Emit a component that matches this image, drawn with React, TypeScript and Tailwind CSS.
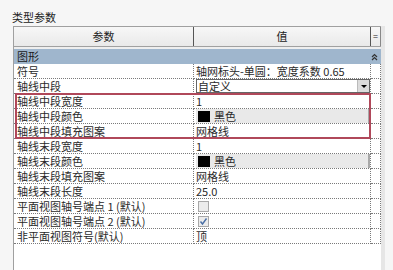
import React from "react";

const font = { fontFamily: '"Noto Sans CJK SC", "Noto Sans", sans-serif' };

function Swatch() {
  return (
    <div className="flex h-full items-center gap-[4px] bg-[#e9e9e9] border-r-2 border-[#a8a8a8] pl-[2px]">
      <div className="h-[11px] w-[12px] bg-black" />
      <span>黑色</span>
    </div>
  );
}

function Dropdown() {
  return (
    <div className="flex h-full items-center justify-between border border-[#666] bg-white pl-[1px]">
      <span>自定义</span>
      <div className="flex h-[12px] w-[12px] items-center justify-center bg-[#dcdcdc] border-l border-[#bbb]">
        <div className="h-0 w-0 border-l-[3px] border-r-[3px] border-t-[3px] border-l-transparent border-r-transparent border-t-black" />
      </div>
    </div>
  );
}

function Check({ on }: { on?: boolean }) {
  return (
    <div className="flex h-full items-center pl-[2px]">
      <div className="flex h-[11px] w-[11px] items-center justify-center border border-[#a8a8a8] bg-[#ececec]">
        {on && (
          <svg width="9" height="9" viewBox="0 0 9 9">
            <path d="M1.5 4.5 L3.5 7 L7.5 1.5" stroke="#4a6fa5" strokeWidth="1.4" fill="none" />
          </svg>
        )}
      </div>
    </div>
  );
}

type Row = { name: string; value: React.ReactNode };

function PropRow({ name, value }: Row) {
  return (
    <div className="grid h-[15px] grid-cols-[180px_177px_10px] text-[11px] leading-[14px] text-[#2a2a2a]">
      <div className="truncate border-b border-r border-dotted border-[#7a7a7a] pl-[3px]">{name}</div>
      <div className="truncate border-b border-r border-dotted border-[#7a7a7a] pl-[2px]">{value}</div>
      <div className="border-b border-r border-dotted border-[#7a7a7a]" />
    </div>
  );
}

export default function App() {
  const top: Row[] = [
    { name: "符号", value: "轴网标头-单圆：宽度系数 0.65" },
    { name: "轴线中段", value: <Dropdown /> },
  ];
  const marked: Row[] = [
    { name: "轴线中段宽度", value: "1" },
    { name: "轴线中段颜色", value: <Swatch /> },
    { name: "轴线中段填充图案", value: "网格线" },
  ];
  const rest: Row[] = [
    { name: "轴线末段宽度", value: "1" },
    { name: "轴线末段颜色", value: <Swatch /> },
    { name: "轴线末段填充图案", value: "网格线" },
    { name: "轴线末段长度", value: "25.0" },
    { name: "平面视图轴号端点 1 (默认)", value: <Check /> },
    { name: "平面视图轴号端点 2 (默认)", value: <Check on /> },
    { name: "非平面视图符号(默认)", value: "顶" },
  ];

  return (
    <div className="flex h-[270px] w-[393px] flex-col overflow-hidden bg-[#f6f6f6]" style={font}>
      <div className="pl-[12px] pt-[9px] text-[11px] leading-[16px] text-[#222]">类型参数</div>
      <div className="ml-[13px] mt-[1px] flex w-[380px] flex-1">
        <div className="flex w-[368px] flex-col border-l border-[#a0a0a0] bg-white">
          <div className="grid h-[21px] grid-cols-[180px_177px_10px] border-y border-[#a0a0a0] bg-gradient-to-b from-[#f7f7f7] to-[#e9e9e9] text-[11px] text-[#222]">
            <div className="flex items-center justify-center border-r border-[#555]">参数</div>
            <div className="flex items-center justify-center border-r border-[#555]">值</div>
            <div className="flex items-center justify-center border-r border-[#888] text-[9px]">=</div>
          </div>
          <div className="h-[2px] bg-[#eeeeee]" />
          <div className="flex h-[15px] items-center justify-between bg-[#9fb6cd] pl-[3px] pr-[3px] text-[11px] text-[#1a1a1a]">
            <span>图形</span>
            <svg width="7" height="8" viewBox="0 0 7 8">
              <path d="M1 4 L3.5 1.5 L6 4 M1 7 L3.5 4.5 L6 7" stroke="#333" strokeWidth="1.2" fill="none" />
            </svg>
          </div>
          {top.map((r) => (
            <PropRow key={r.name} {...r} />
          ))}
          <div className="relative">
            {marked.map((r) => (
              <PropRow key={r.name} {...r} />
            ))}
            <div className="pointer-events-none absolute bottom-[0px] left-[1px] right-[10px] top-[-1px] border-2 border-[#b0485a]" />
          </div>
          {rest.map((r) => (
            <PropRow key={r.name} {...r} />
          ))}
        </div>
        <div className="w-[4px] bg-[#e6e6e6]" />
      </div>
    </div>
  );
}
